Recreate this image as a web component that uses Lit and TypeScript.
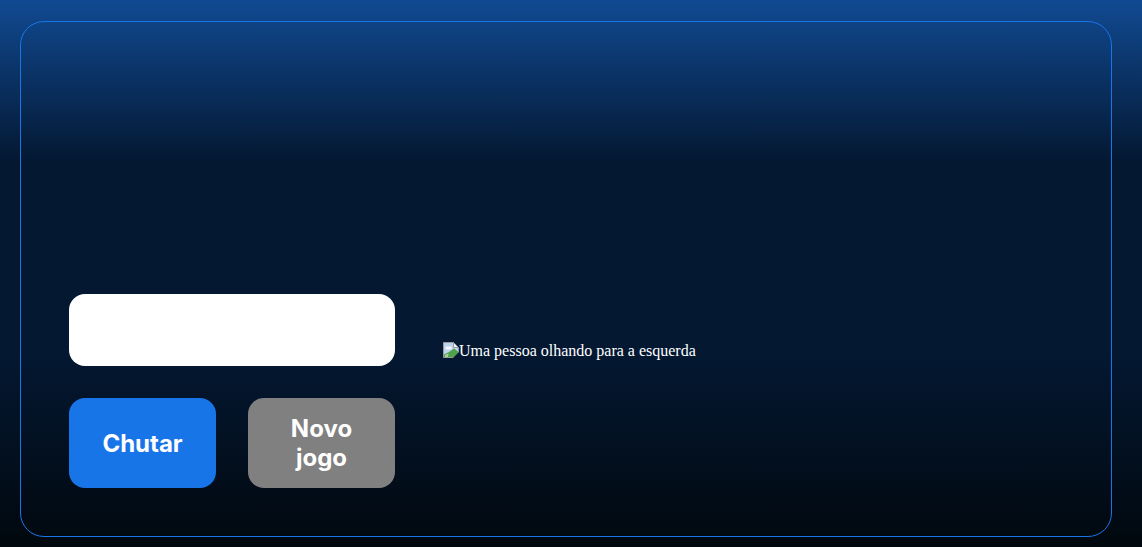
import { LitElement, css, html } from "lit";
import { customElement } from "lit/decorators.js";

@customElement("app-root")
export class AppRoot extends LitElement {
  static styles = css`
    :host {
      display: block;
      box-sizing: border-box;
      height: 547px;
      padding: 21px 30px 10px 20px;
      overflow: hidden;
      background: linear-gradient(#1354a5 0%, #041832 33.33%, #041832 66.67%, #01080e 100%) 0 -32px / 100% 579px no-repeat;
    }

    .container {
      box-sizing: border-box;
      display: flex;
      align-items: flex-end;
      gap: 48px;
      height: 516px;
      padding: 48px;
      border: 1px solid #1875e8;
      border-radius: 24px;
    }

    .info {
      display: flex;
      flex-direction: column;
      gap: 32px;
      width: 326px;
      flex: none;
    }

    .guess {
      box-sizing: border-box;
      display: block;
      width: 100%;
      height: 72px;
      padding: 16px;
      border: none;
      border-radius: 16px;
      background: #fff;
      font-family: Inter, sans-serif;
      font-size: 24px;
      outline: none;
    }

    .actions {
      display: flex;
      gap: 32px;
    }

    .btn {
      flex: 1 1 0;
      min-width: 0;
      padding: 16px 32px;
      border: none;
      border-radius: 16px;
      color: #fff;
      font-family: Inter, sans-serif;
      font-size: 24px;
      font-weight: 700;
      line-height: 29px;
      cursor: pointer;
    }

    .btn-primary {
      background: #1875e8;
    }

    .btn-muted {
      background: #808080;
    }

    .picture {
      display: flex;
      align-items: flex-start;
      height: 274px;
      padding-top: 128px;
      box-sizing: border-box;
      color: #fff;
      font-family: "Liberation Serif", "Times New Roman", serif;
      font-size: 16px;
      line-height: 18px;
    }

    .broken {
      display: block;
      flex: none;
      width: 16px;
      height: 16px;
    }
  `;

  render() {
    return html`
      <div class="container">
        <div class="info">
          <input class="guess" type="text" />
          <div class="actions">
            <button class="btn btn-primary">Chutar</button>
            <button class="btn btn-muted">Novo jogo</button>
          </div>
        </div>
        <div class="picture">
          <svg class="broken" viewBox="0 0 16 16" aria-hidden="true">
            <path d="M0.5 0.5H10.5L15.5 5.5V15.5H0.5Z" fill="#bcd2ee" stroke="#9a9a9a" />
            <path d="M2.5 4.5H8.5V7.5H2.5Z" fill="#f4f7fb" />
            <path d="M1 15V12.5L6 10L11 6.5L15 9.5V15Z" fill="#4ea24a" />
            <path d="M2 15V13L5.5 11.5L5 15Z" fill="#a8d29c" />
            <path d="M10.5 0.5V5.5H15.5Z" fill="#eef3fa" stroke="#9a9a9a" />
            <path d="M10 16L16 10V16Z" fill="#041832" />
          </svg>
          <span>Uma pessoa olhando para a esquerda</span>
        </div>
      </div>
    `;
  }
}
